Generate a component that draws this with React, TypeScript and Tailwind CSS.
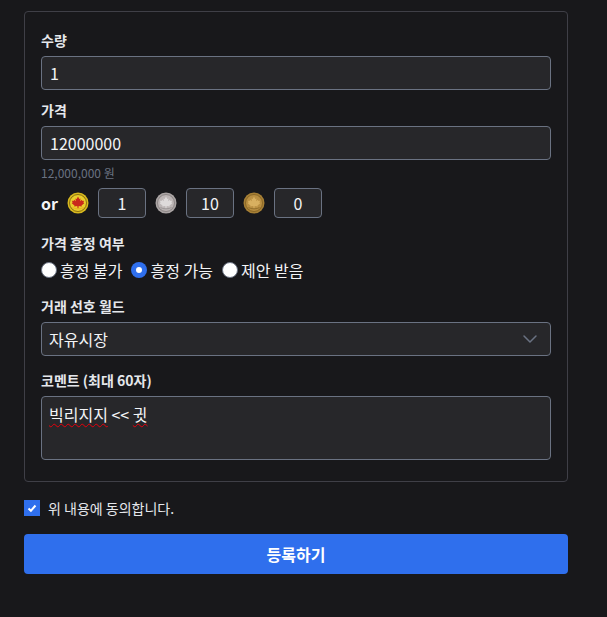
import { ChevronDown } from 'lucide-react';

const FONT = "font-['Noto_Sans_CJK_KR','Noto_Sans',sans-serif]";

function Coin({ rim, face, leaf, ring, stem }: { rim: string; face: string; leaf: string; ring: string; stem: string }) {
  return (
    <svg width="22" height="22" viewBox="0 0 22 22" className="shrink-0">
      <circle cx="11" cy="11" r="10.5" fill={rim} />
      <circle cx="11" cy="11" r="8.5" fill={face} stroke={ring} strokeWidth="1" />
      <path
        d="M11 4.5l1.3 2.6 1.2-.6-.3 2.7 1.7-1.5.5 1.3 1.7-.3-.7 1.9.9.6-2.8 2.2.3 1-3.1-.4-.3 2.4h-.8l-.3-2.4-3.1.4.3-1-2.8-2.2.9-.6-.7-1.9 1.7.3.5-1.3 1.7 1.5-.3-2.7 1.2.6z"
        fill={leaf}
      />
      <path d="M5.5 15.5c2 1.8 9 1.8 11 0" stroke={stem} strokeWidth="1" fill="none" />
    </svg>
  );
}

function Label({ children }: { children: React.ReactNode }) {
  return <div className="mb-[6px] h-5 text-sm leading-5 font-bold text-gray-200">{children}</div>;
}

function TextField({ value }: { value: string }) {
  return (
    <input
      readOnly
      value={value}
      className="block h-[34px] w-full rounded border border-gray-500 bg-zinc-800 px-2 text-base text-gray-100 outline-none"
    />
  );
}

function CoinInput({ value }: { value: string }) {
  return (
    <input
      readOnly
      value={value}
      className="block h-[30px] w-12 rounded border border-gray-500 bg-zinc-800 text-center text-base text-gray-100 outline-none"
    />
  );
}

function Radio({ label, checked }: { label: string; checked?: boolean }) {
  return (
    <label className="flex items-center gap-[3px] text-base leading-[22px] text-gray-100">
      {checked ? (
        <span className="flex h-4 w-4 items-center justify-center rounded-full bg-[#2f6fed]">
          <span className="h-1.5 w-1.5 rounded-full bg-white" />
        </span>
      ) : (
        <span className="h-4 w-4 rounded-full border border-gray-500 bg-white" />
      )}
      {label}
    </label>
  );
}

export default function App() {
  return (
    <div className={`${FONT} h-[617px] w-[607px] overflow-hidden bg-zinc-900 px-[24px] pt-[11px]`}>
      <div className="h-[471px] w-[544px] rounded border border-zinc-700 px-4 pt-[18px]">
        <Label>수량</Label>
        <TextField value="1" />

        <div className="mt-[10px]">
          <Label>가격</Label>
          <TextField value="12000000" />
        </div>
        <p className="mt-[5px] h-4 text-xs leading-4 text-gray-500">12,000,000 원</p>

        {/* coin row */}
        <div className="mt-[7px] flex h-[30px] items-center">
          <span className="mr-[9px] text-base font-bold text-gray-100">or</span>
          <Coin rim="#d8b91e" face="#e9cd2c" ring="#8a6f10" leaf="#c9281c" stem="#e8b020" />
          <div className="mr-[9px] ml-[9px]">
            <CoinInput value="1" />
          </div>
          <Coin rim="#aaa4a4" face="#bcb5b5" ring="#8b8585" leaf="#dedada" stem="#9c9696" />
          <div className="mr-[9px] ml-[9px]">
            <CoinInput value="10" />
          </div>
          <Coin rim="#a67f35" face="#b98f42" ring="#8a6726" leaf="#d8b060" stem="#94702c" />
          <div className="ml-[9px]">
            <CoinInput value="0" />
          </div>
        </div>

        <div className="mt-[15px]">
          <Label>가격 흥정 여부</Label>
          <div className="flex gap-[9px]">
            <Radio label="흥정 불가" />
            <Radio label="흥정 가능" checked />
            <Radio label="제안 받음" />
          </div>
        </div>

        <div className="mt-[15px]">
          <Label>거래 선호 월드</Label>
          <div className="flex h-[34px] items-center justify-between rounded border border-gray-500 bg-zinc-800 pr-2 pl-[7px] text-base text-gray-100">
            자유시장
            <ChevronDown size={24} strokeWidth={1.5} className="text-gray-500" />
          </div>
        </div>

        <div className="mt-[14px]">
          <Label>코멘트 (최대 60자)</Label>
          <div className="h-16 rounded border border-gray-500 bg-zinc-800 pt-[5px] pr-2 pl-[7px] text-base leading-6 text-gray-100">
            <span className="underline decoration-red-600 decoration-wavy decoration-1 underline-offset-2">빅리지지</span>
            {' << '}
            <span className="underline decoration-red-600 decoration-wavy decoration-1 underline-offset-2">귓</span>
          </div>
        </div>
      </div>

      <label className="mt-[18px] flex h-4 items-center gap-2 text-sm text-gray-200">
        <span className="flex h-4 w-4 items-center justify-center bg-[#2f6fed]">
          <svg width="12" height="12" viewBox="0 0 12 12" fill="none">
            <path d="M2.5 6.5l2.4 2.3 4.6-5.3" stroke="white" strokeWidth="2" />
          </svg>
        </span>
        위 내용에 동의합니다.
      </label>

      <button className="mt-[18px] h-10 w-[544px] rounded bg-[#2f6fed] text-base font-bold text-white">
        등록하기
      </button>
    </div>
  );
}
